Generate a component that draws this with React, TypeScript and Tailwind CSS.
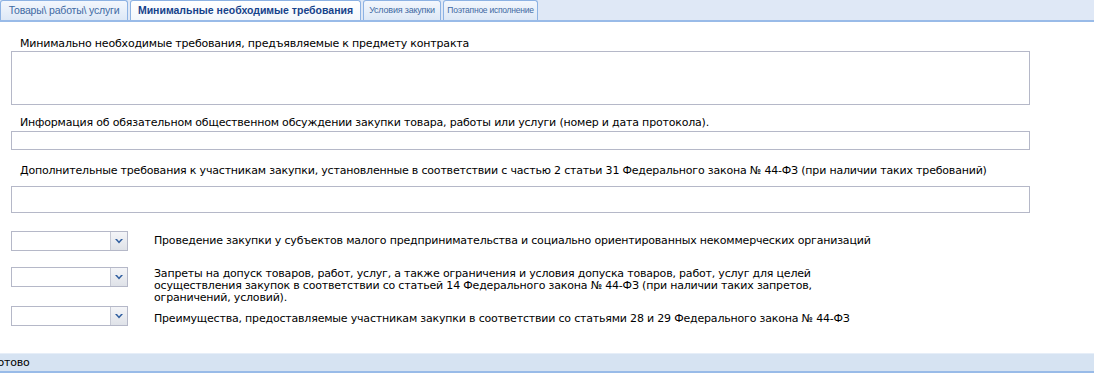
import React from "react";

const tabs = [
  { label: "Товары\\ работы\\ услуги", cls: "w-[128px] text-[10.5px]", active: false },
  { label: "Минимальные необходимые требования", cls: "w-[231px] text-[10.5px]", active: true },
  { label: "Условия закупки", cls: "w-[78px] text-[9px] tracking-[-0.2px]", active: false },
  { label: "Поэтапное исполнение", cls: "w-[95px] text-[8.5px] tracking-[-0.25px]", active: false },
];

function Combo() {
  return (
    <div className="flex h-[20px] w-[117px] shrink-0 border border-[#b5b8c8] bg-white">
      <div className="flex-1" />
      <div className="flex w-[17px] items-center justify-center border-l border-[#c6c9d4] bg-gradient-to-b from-[#f4f5f8] to-[#dfe2e8]">
        <svg width="8" height="5" viewBox="0 0 8 5">
          <path d="M0 0 L8 0 L4 4.5 Z" fill="#2f5d9e" />
          <path d="M2 0 L6 0 L4 2.2 Z" fill="#eef1f6" />
        </svg>
      </div>
    </div>
  );
}

export default function App() {
  return (
    <div className="flex h-[373px] w-[1094px] flex-col overflow-hidden bg-white font-['DejaVu_Sans',Verdana,sans-serif] text-[11px] tracking-[-0.19px] text-black">
      {/* tab strip */}
      <div className="flex h-[22px] items-end gap-[2px] border-b-2 border-[#99bbe8] bg-[#dfe8f6]">
        {tabs.map((t) => (
          <div
            key={t.label}
            className={`flex h-[20px] ${t.cls} shrink-0 items-center justify-center overflow-hidden whitespace-nowrap rounded-t-[3px] border border-b-0 border-[#8db2e3] font-['Liberation_Sans',Tahoma,sans-serif] ${
              t.active
                ? "bg-gradient-to-b from-white to-[#f3f7fc] font-bold tracking-normal text-[#15428b]"
                : "bg-gradient-to-b from-[#f3f7fd] to-[#dde8f6] text-[#416aa3]"
            }`}
          >
            {t.label}
          </div>
        ))}
      </div>

      <div className="flex flex-col pl-[11px]">
        <div className="ml-[9px] mt-[15px] leading-[13px]">
          Минимально необходимые требования, предъявляемые к предмету контракта
        </div>
        <div className="mt-[1px] h-[54px] w-[1019px] border border-[#b5b8c8]" />

        <div className="ml-[9px] mt-[11px] leading-[13px]">
          Информация об обязательном общественном обсуждении закупки товара, работы или услуги (номер и дата протокола).
        </div>
        <div className="mt-[2px] h-[19px] w-[1019px] border border-[#b5b8c8]" />

        <div className="ml-[9px] mt-[14px] leading-[13px]">
          Дополнительные требования к участникам закупки, установленные в соответствии с частью 2 статьи 31 Федерального закона № 44-ФЗ (при наличии таких требований)
        </div>
        <div className="mt-[9px] h-[27px] w-[1019px] border border-[#b5b8c8]" />

        <div className="mt-[18px] flex items-center gap-[26px]">
          <Combo />
          <div className="leading-[12px]">
            Проведение закупки у субъектов малого предпринимательства и социально ориентированных некоммерческих организаций
          </div>
        </div>

        <div className="mt-[16px] flex items-start gap-[26px]">
          <Combo />
          <div className="w-[700px] pt-[1px] leading-[12px]">
            Запреты на допуск товаров, работ, услуг, а также ограничения и условия допуска товаров, работ, услуг для целей
            <br />
            осуществления закупок в соответствии со статьей 14 Федерального закона № 44-ФЗ (при наличии таких запретов,
            <br />
            ограничений, условий).
          </div>
        </div>

        <div className="mt-[2px] flex items-end gap-[26px]">
          <Combo />
          <div className="pb-[1px] leading-[12px]">
            Преимущества, предоставляемые участникам закупки в соответствии со статьями 28 и 29 Федерального закона № 44-ФЗ
          </div>
        </div>
      </div>

      <div className="mt-auto flex h-[20px] items-center border-t border-b-2 border-t-[#e6eef8] border-b-[#99bbe8] bg-[#d6e3f2] text-[11px] leading-[12px]">
        <span className="-ml-[9px]">Готово</span>
      </div>
    </div>
  );
}
